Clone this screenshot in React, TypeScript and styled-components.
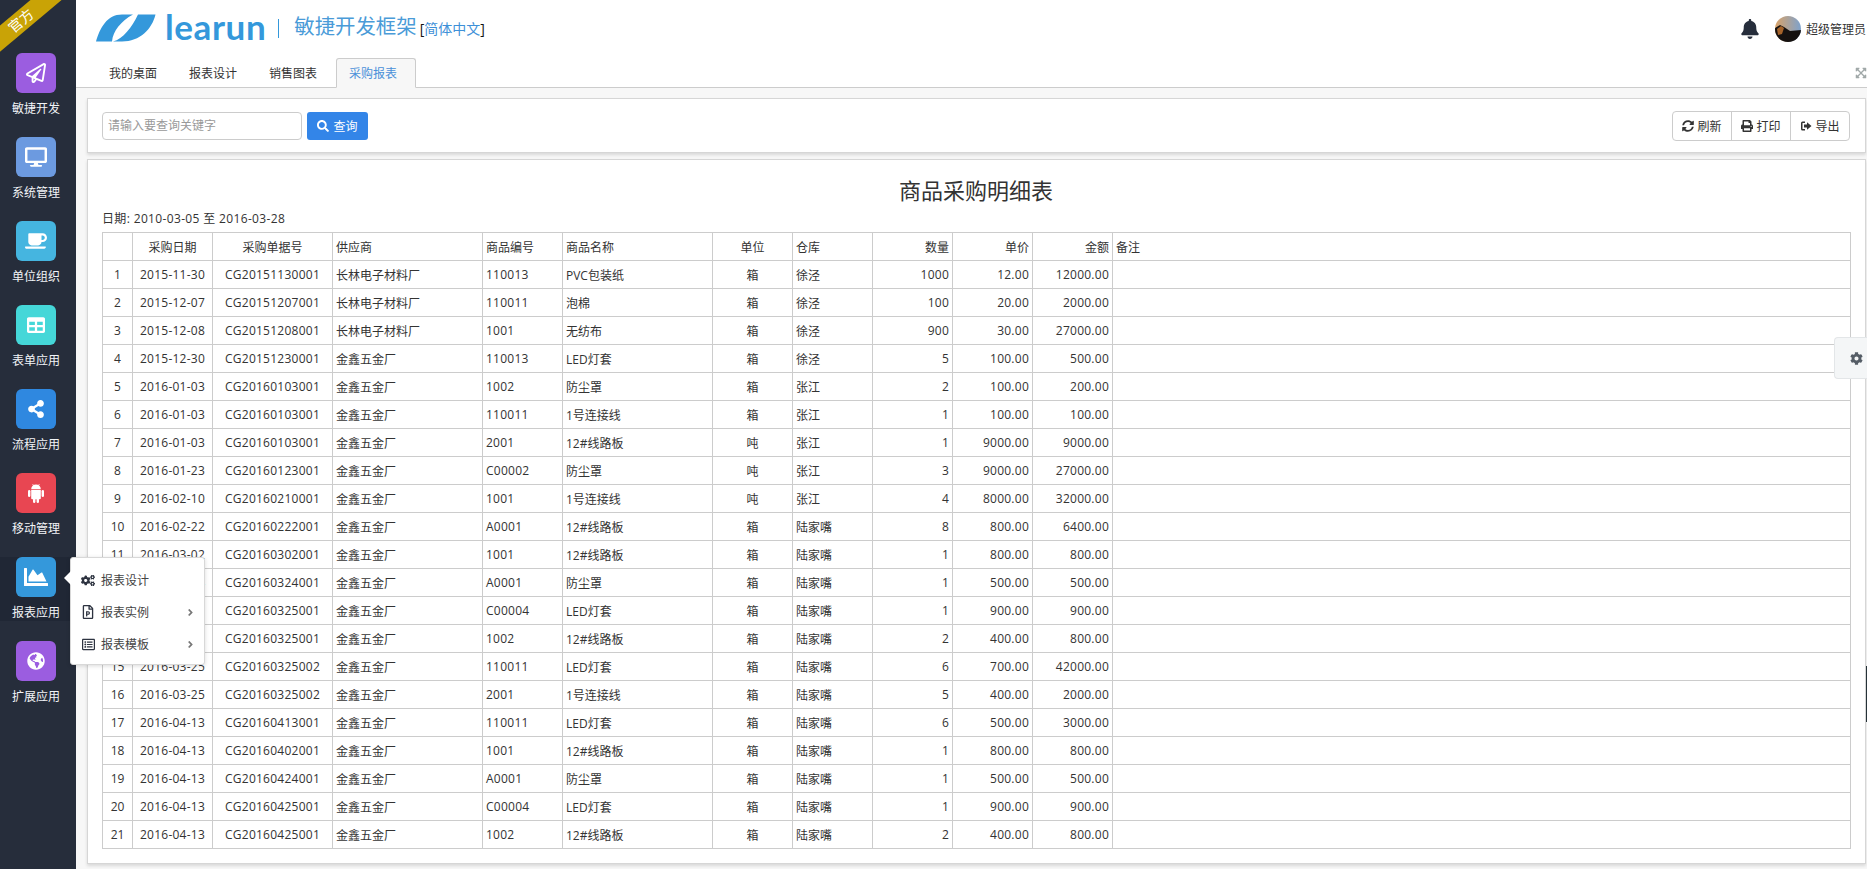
import React from "react";
import styled, { createGlobalStyle } from "styled-components";
import {
  FaRegPaperPlane, FaDesktop, FaCoffee, FaTable, FaShareAlt, FaChartArea, FaGlobeAmericas,
  FaBell, FaSyncAlt, FaPrint, FaSearch, FaCogs, FaRegFilePowerpoint, FaRegListAlt, FaAngleRight,
  FaExpandArrowsAlt, FaCog,
} from "react-icons/fa";

const Global = createGlobalStyle`
  html, body { margin: 0; padding: 0; height: 100%; overflow: hidden; background: #f7f7f7; }
  body { font-family: "Open Sans", "Noto Sans CJK SC", sans-serif; font-size: 12px; color: #333; }
  * { box-sizing: border-box; }
`;

const Page = styled.div`
  display: flex;
  width: 1867px;
  height: 869px;
  position: relative;
  overflow: hidden;
`;

const Sidebar = styled.nav`
  position: relative;
  width: 76px;
  flex: none;
  background: #262d3b;
  padding-top: 53px;
  display: flex;
  flex-direction: column;
`;

const Ribbon = styled.div`
  position: absolute;
  left: -29px;
  top: 11px;
  width: 100px;
  height: 20px;
  line-height: 20px;
  background: #c9a306;
  color: #fff;
  font-size: 14px;
  text-align: center;
  transform: rotate(-40deg);
`;

const RibbonClip = styled.div`
  position: absolute;
  inset: 0;
  overflow: hidden;
`;

const SideItem = styled.div<{ $active?: boolean }>`
  position: relative;
  z-index: ${(p) => (p.$active ? 3 : 1)};
  height: 64px;
  margin-bottom: 20px;
  padding-right: 4px;
  display: flex;
  flex-direction: column;
  align-items: center;
  color: #f2f4f7;
  background: ${(p) => (p.$active ? "#202735" : "transparent")};
`;

const SideIcon = styled.div<{ $bg: string; $size: number }>`
  width: 40px;
  height: 40px;
  border-radius: 6px;
  background: ${(p) => p.$bg};
  color: #fff;
  font-size: ${(p) => p.$size}px;
  display: flex;
  align-items: center;
  justify-content: center;
`;

const SideLabel = styled.div`
  margin-top: 7px;
  font-size: 12px;
  line-height: 17px;
  white-space: nowrap;
`;

const Popover = styled.div`
  position: absolute;
  left: 70px;
  top: 0;
  width: 135px;
  height: 108px;
  background: #fff;
  border: 1px solid #d8d8d8;
  border-radius: 3px;
  box-shadow: 0 1px 4px rgba(0, 0, 0, 0.15);
  padding: 6px 0;
  color: #333;
  &::before {
    content: "";
    position: absolute;
    left: -7px;
    top: 13px;
    border-top: 7px solid transparent;
    border-bottom: 7px solid transparent;
    border-right: 7px solid #fff;
  }
`;

const PopItem = styled.div`
  height: 32px;
  display: flex;
  align-items: center;
  padding: 0 8px 0 10px;
  font-size: 12px;
  color: #444;
`;

const PopIcon = styled.span<{ $size: number }>`
  width: 14px;
  margin-right: 6px;
  display: flex;
  justify-content: center;
  font-size: ${(p) => p.$size}px;
  color: #2d3340;
`;

const PopArrow = styled.span`
  margin-left: auto;
  display: flex;
  font-size: 11px;
  color: #777;
`;

const Main = styled.div`
  flex: 1;
  min-width: 0;
  display: flex;
  flex-direction: column;
`;

const Header = styled.header`
  height: 88px;
  flex: none;
  background: #fff;
  border-bottom: 1px solid #ccc;
  display: flex;
  flex-direction: column;
`;

const TopBar = styled.div`
  height: 58px;
  flex: none;
  display: flex;
  align-items: center;
  padding: 0 1px 6px 20px;
`;

const LogoMark = styled.svg`
  width: 60px;
  height: 28px;
  flex: none;
  margin-top: 4px;
  fill: #3498db;
`;

const LogoWord = styled.span`
  margin-left: 9px;
  font-family: "Lato", "Open Sans", sans-serif;
  font-weight: 700;
  font-size: 35px;
  line-height: 40px;
  letter-spacing: 0.6px;
  color: #3498db;
`;

const LogoSep = styled.span`
  width: 1px;
  height: 19px;
  background: #3498db;
  margin: 4px 15px 0 12px;
`;

const LogoTitle = styled.span`
  font-size: 20.4px;
  line-height: 28px;
  color: #4a9bd8;
`;

const Lang = styled.span`
  margin: 3px 0 0 3px;
  font-size: 14px;
  color: #111;
  a {
    color: #3e90d8;
    text-decoration: none;
  }
`;

const UserBox = styled.div`
  margin-left: auto;
  display: flex;
  align-items: center;
  margin-top: 6px;
`;

const Bell = styled.span`
  display: flex;
  font-size: 20px;
  color: #262d3b;
  margin-right: 15px;
`;

const Avatar = styled.svg`
  width: 26px;
  height: 26px;
  border-radius: 50%;
  margin-right: 5px;
`;

const TabRow = styled.div`
  position: relative;
  flex: 1;
  display: flex;
  align-items: flex-end;
  padding-left: 20px;
`;

const Tab = styled.div<{ $active?: boolean }>`
  width: 80px;
  height: 30px;
  margin-bottom: -1px;
  padding-right: 6px;
  display: flex;
  align-items: center;
  justify-content: center;
  font-size: 12px;
  color: ${(p) => (p.$active ? "#4a90d9" : "#333")};
  background: ${(p) => (p.$active ? "#f7f7f7" : "transparent")};
  border: 1px solid ${(p) => (p.$active ? "#ccc" : "transparent")};
  border-bottom-color: ${(p) => (p.$active ? "#f7f7f7" : "transparent")};
  border-radius: 3px 3px 0 0;
`;

const ExpandIcon = styled.span`
  position: absolute;
  right: 0;
  bottom: 8px;
  display: flex;
  font-size: 12px;
  color: #a0a8a8;
`;

const Content = styled.main`
  flex: 1;
  min-height: 0;
  padding: 10px 1px 5px 10.5px;
  display: flex;
  flex-direction: column;
  gap: 6px;
`;

const Panel = styled.section`
  background: #fff;
  border: 1px solid #d6d6d6;
  box-shadow: 0 2px 3px rgba(0, 0, 0, 0.12);
`;

const ToolPanel = styled(Panel)`
  height: 55px;
  flex: none;
  display: flex;
  align-items: center;
  padding: 0 15px 0 14.5px;
`;

const SearchInput = styled.input`
  width: 200px;
  height: 28px;
  border: 1px solid #ccc;
  border-radius: 4px;
  padding: 0 5px;
  font: inherit;
  font-size: 12px;
  outline: none;
  &::placeholder {
    color: #999;
    opacity: 1;
  }
`;

const QueryButton = styled.button`
  width: 61px;
  height: 28px;
  margin-left: 5px;
  border: 0;
  border-radius: 3px;
  background: #3385e8;
  color: #fff;
  font: inherit;
  font-size: 12px;
  display: flex;
  align-items: center;
  justify-content: center;
  gap: 4px;
`;

const ButtonGroup = styled.div`
  margin-left: auto;
  width: 178px;
  height: 30px;
  display: flex;
  border: 1px solid #ccc;
  border-radius: 4px;
`;

const GroupButton = styled.div`
  flex: 1;
  display: flex;
  align-items: center;
  justify-content: center;
  gap: 3px;
  font-size: 12px;
  color: #333;
  & + & {
    border-left: 1px solid #ccc;
  }
`;

const ReportPanel = styled(Panel)`
  flex: 1;
  min-height: 0;
  padding: 0 15px 0 14.5px;
`;

const ReportTitle = styled.h1`
  margin: 0;
  padding-top: 14px;
  height: 49px;
  line-height: 32px;
  text-align: center;
  font-size: 22px;
  font-weight: 400;
  color: #333;
`;

const DateLine = styled.div`
  height: 23px;
  line-height: 20px;
  font-size: 12px;
  letter-spacing: 0.35px;
  color: #333;
`;

const Table = styled.table`
  width: 1748px;
  table-layout: fixed;
  border-collapse: collapse;
  font-size: 12px;
`;

const Cell = styled.td<{ $align?: string; $num?: boolean }>`
  height: 28px;
  padding: 0 3px;
  border: 1px solid #ccc;
  white-space: nowrap;
  overflow: hidden;
  text-align: ${(p) => p.$align || "left"};
  letter-spacing: ${(p) => (p.$num ? "0.25px" : "0")};
  font-weight: 400;
  color: #333;
`;

const SettingsTab = styled.div`
  position: absolute;
  right: 0;
  top: 337px;
  width: 33px;
  height: 42px;
  padding-left: 10px;
  background: #f4f6f7;
  border: 1px solid #e3e6e8;
  border-right: 0;
  border-radius: 4px 0 0 4px;
  display: flex;
  align-items: center;
  justify-content: center;
  font-size: 13px;
  color: #555d66;
`;

const ScrollSliver = styled.div`
  position: absolute;
  right: 0;
  top: 666px;
  width: 1.5px;
  height: 56px;
  background: #263238;
`;

const ExportIcon = () => (
  <svg width="12" height="12" viewBox="0 0 12 12">
    <path d="M5 1.5H2.5A1.5 1.5 0 0 0 1 3v6a1.5 1.5 0 0 0 1.5 1.5H5V9H2.5V3H5z" fill="#333" />
    <path d="M4 4.5h3V2.2L11.5 6 7 9.8V7.5H4z" fill="#333" />
  </svg>
);

const AndroidIcon = () => (
  <svg width="20" height="20" viewBox="0 0 20 20" fill="#fff">
    <path d="M5.2 6.2a4.8 4.8 0 0 1 9.6 0z" />
    <path d="M6.5 1l1.6 2M13.5 1l-1.6 2" stroke="#fff" strokeWidth="0.7" />
    <path d="M5.2 7h9.6v8.2a1 1 0 0 1-1 1H6.2a1 1 0 0 1-1-1z" />
    <rect x="2" y="7" width="2.4" height="7" rx="1.2" />
    <rect x="15.6" y="7" width="2.4" height="7" rx="1.2" />
    <rect x="7" y="15" width="2.4" height="5" rx="1.2" />
    <rect x="10.6" y="15" width="2.4" height="5" rx="1.2" />
  </svg>
);

const nav = [
  { label: "敏捷开发", bg: "#9b5de0", size: 20, icon: <FaRegPaperPlane /> },
  { label: "系统管理", bg: "#6c9ae0", size: 22, icon: <FaDesktop /> },
  { label: "单位组织", bg: "#45b5e0", size: 22, icon: <FaCoffee /> },
  { label: "表单应用", bg: "#45d7d8", size: 18, icon: <FaTable /> },
  { label: "流程应用", bg: "#2f88e0", size: 18, icon: <FaShareAlt /> },
  { label: "移动管理", bg: "#e84652", size: 20, icon: <AndroidIcon /> },
  { label: "报表应用", bg: "#3498db", size: 24, icon: <FaChartArea />, active: true },
  { label: "扩展应用", bg: "#9b5de0", size: 18, icon: <FaGlobeAmericas /> },
];

const cols = [30, 80, 120, 150, 80, 150, 80, 80, 80, 80, 80, 738];
const heads: [string, string][] = [
  ["", "center"], ["采购日期", "center"], ["采购单据号", "center"], ["供应商", "left"], ["商品编号", "left"],
  ["商品名称", "left"], ["单位", "center"], ["仓库", "left"], ["数量", "right"], ["单价", "right"], ["金额", "right"], ["备注", "left"],
];
const aligns = heads.map((h) => h[1]);
const numeric = [true, true, false, true, false, false, false, true, true, true];

const C = "长林电子材料厂";
const J = "金鑫五金厂";
const rows: (string | number)[][] = [
  ["2015-11-30", "CG20151130001", C, "110013", "PVC包装纸", "箱", "徐泾", 1000, "12.00", "12000.00"],
  ["2015-12-07", "CG20151207001", C, "110011", "泡棉", "箱", "徐泾", 100, "20.00", "2000.00"],
  ["2015-12-08", "CG20151208001", C, "1001", "无纺布", "箱", "徐泾", 900, "30.00", "27000.00"],
  ["2015-12-30", "CG20151230001", J, "110013", "LED灯套", "箱", "徐泾", 5, "100.00", "500.00"],
  ["2016-01-03", "CG20160103001", J, "1002", "防尘罩", "箱", "张江", 2, "100.00", "200.00"],
  ["2016-01-03", "CG20160103001", J, "110011", "1号连接线", "箱", "张江", 1, "100.00", "100.00"],
  ["2016-01-03", "CG20160103001", J, "2001", "12#线路板", "吨", "张江", 1, "9000.00", "9000.00"],
  ["2016-01-23", "CG20160123001", J, "C00002", "防尘罩", "吨", "张江", 3, "9000.00", "27000.00"],
  ["2016-02-10", "CG20160210001", J, "1001", "1号连接线", "吨", "张江", 4, "8000.00", "32000.00"],
  ["2016-02-22", "CG20160222001", J, "A0001", "12#线路板", "箱", "陆家嘴", 8, "800.00", "6400.00"],
  ["2016-03-02", "CG20160302001", J, "1001", "12#线路板", "箱", "陆家嘴", 1, "800.00", "800.00"],
  ["2016-03-24", "CG20160324001", J, "A0001", "防尘罩", "箱", "陆家嘴", 1, "500.00", "500.00"],
  ["2016-03-25", "CG20160325001", J, "C00004", "LED灯套", "箱", "陆家嘴", 1, "900.00", "900.00"],
  ["2016-03-25", "CG20160325001", J, "1002", "12#线路板", "箱", "陆家嘴", 2, "400.00", "800.00"],
  ["2016-03-25", "CG20160325002", J, "110011", "LED灯套", "箱", "陆家嘴", 6, "700.00", "42000.00"],
  ["2016-03-25", "CG20160325002", J, "2001", "1号连接线", "箱", "陆家嘴", 5, "400.00", "2000.00"],
  ["2016-04-13", "CG20160413001", J, "110011", "LED灯套", "箱", "陆家嘴", 6, "500.00", "3000.00"],
  ["2016-04-13", "CG20160402001", J, "1001", "12#线路板", "箱", "陆家嘴", 1, "800.00", "800.00"],
  ["2016-04-13", "CG20160424001", J, "A0001", "防尘罩", "箱", "陆家嘴", 1, "500.00", "500.00"],
  ["2016-04-13", "CG20160425001", J, "C00004", "LED灯套", "箱", "陆家嘴", 1, "900.00", "900.00"],
  ["2016-04-13", "CG20160425001", J, "1002", "12#线路板", "箱", "陆家嘴", 2, "400.00", "800.00"],
];

export default function App() {
  return (
    <Page>
      <Global />
      <Sidebar>
        <RibbonClip>
          <Ribbon>官方</Ribbon>
        </RibbonClip>
        {nav.map((n) => (
          <SideItem key={n.label} $active={n.active}>
            <SideIcon $bg={n.bg} $size={n.size}>{n.icon}</SideIcon>
            <SideLabel>{n.label}</SideLabel>
            {n.active && (
              <Popover>
                <PopItem>
                  <PopIcon $size={15}><FaCogs /></PopIcon>报表设计
                </PopItem>
                <PopItem>
                  <PopIcon $size={14}><FaRegFilePowerpoint /></PopIcon>报表实例
                  <PopArrow><FaAngleRight /></PopArrow>
                </PopItem>
                <PopItem>
                  <PopIcon $size={13}><FaRegListAlt /></PopIcon>报表模板
                  <PopArrow><FaAngleRight /></PopArrow>
                </PopItem>
              </Popover>
            )}
          </SideItem>
        ))}
      </Sidebar>
      <Main>
        <Header>
          <TopBar>
            <LogoMark viewBox="0 0 60 28">
              <path d="M0 27.5C4 14 11 .5 26 .5h11C25 7 17 17 16 27.5z" />
              <path d="M17 27.5C27 25 36 13 42 .5h17.5C56 15 44 27.5 26 27.5z" />
            </LogoMark>
            <LogoWord>learun</LogoWord>
            <LogoSep />
            <LogoTitle>敏捷开发框架</LogoTitle>
            <Lang>[<a href="#">简体中文</a>]</Lang>
            <UserBox>
              <Bell><FaBell /></Bell>
              <Avatar viewBox="0 0 26 26">
                <defs>
                  <linearGradient id="sky" x1="0" y1="0" x2="1" y2="0">
                    <stop offset="0" stopColor="#d9a268" />
                    <stop offset="1" stopColor="#7ea2cc" />
                  </linearGradient>
                </defs>
                <rect width="26" height="26" fill="url(#sky)" />
                <path d="M0 12l5-3 4 2 6 4 11-1v12H0z" fill="#15110f" />
                <path d="M2 13l4-3 3 2-2 6-4 1z" fill="#a5632a" />
              </Avatar>
              超级管理员
            </UserBox>
          </TopBar>
          <TabRow>
            <Tab>我的桌面</Tab>
            <Tab>报表设计</Tab>
            <Tab>销售图表</Tab>
            <Tab $active>采购报表</Tab>
            <ExpandIcon><FaExpandArrowsAlt /></ExpandIcon>
          </TabRow>
        </Header>
        <Content>
          <ToolPanel>
            <SearchInput placeholder="请输入要查询关键字" />
            <QueryButton><FaSearch />查询</QueryButton>
            <ButtonGroup>
              <GroupButton><FaSyncAlt />刷新</GroupButton>
              <GroupButton><FaPrint />打印</GroupButton>
              <GroupButton><ExportIcon />导出</GroupButton>
            </ButtonGroup>
          </ToolPanel>
          <ReportPanel>
            <ReportTitle>商品采购明细表</ReportTitle>
            <DateLine>日期: 2010-03-05 至 2016-03-28</DateLine>
            <Table>
              <colgroup>
                {cols.map((w, i) => <col key={i} width={w} />)}
              </colgroup>
              <thead>
                <tr>
                  {heads.map(([t, a], i) => <Cell as="th" key={i} $align={a}>{t}</Cell>)}
                </tr>
              </thead>
              <tbody>
                {rows.map((r, i) => (
                  <tr key={i}>
                    <Cell $align="center">{i + 1}</Cell>
                    {r.map((v, j) => <Cell key={j} $align={aligns[j + 1]} $num={numeric[j]}>{v}</Cell>)}
                    <Cell />
                  </tr>
                ))}
              </tbody>
            </Table>
          </ReportPanel>
        </Content>
      </Main>
      <SettingsTab><FaCog /></SettingsTab>
      <ScrollSliver />
    </Page>
  );
}
